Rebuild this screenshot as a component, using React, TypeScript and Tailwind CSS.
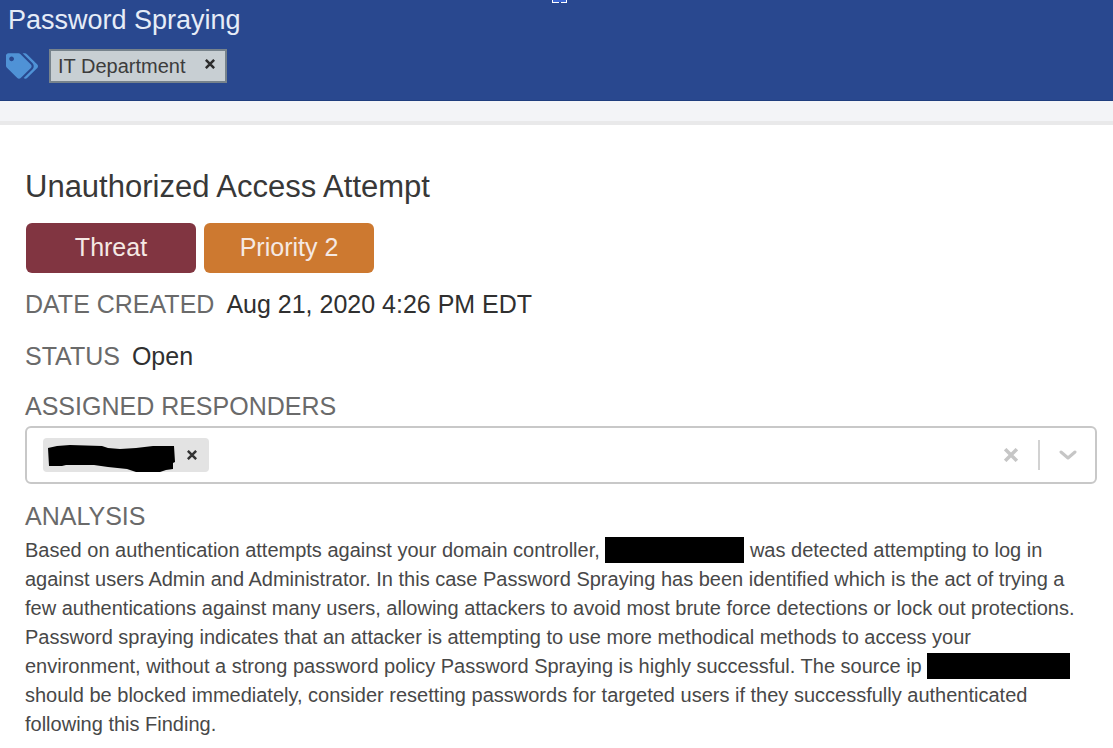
import React from "react";
import { FaTags } from "react-icons/fa";

function Cross({ className }: { className: string }) {
  return (
    <svg viewBox="0 0 12 12" className={className} fill="none" stroke="currentColor" strokeWidth="3" aria-hidden="true">
      <path d="M1 1 L11 11 M11 1 L1 11" />
    </svg>
  );
}

function Redacted({ className }: { className: string }) {
  return <span className={`inline-block h-[26px] bg-black align-[-6px] ${className}`} />;
}

function Field({ label, value }: { label: string; value: string }) {
  return (
    <div className="flex gap-3 text-[25px] leading-8">
      <dt className="text-[#6a6a6a]">{label}</dt>
      <dd className="text-[#303030]">{value}</dd>
    </div>
  );
}

export default function App() {
  return (
    <div className="bg-white font-['Liberation_Sans',Arial,sans-serif]">
      <header className="relative h-[101px] border-b border-[#1f3d7e] bg-[#29488f] px-2 pt-1">
        <svg viewBox="0 0 15 3" className="absolute left-1/2 top-0 h-[3px] w-[15px] -translate-x-[5px]" aria-hidden="true">
          <path d="M1 0H14V2H1Z" fill="#3b66d0" />
          <path d="M0 0H1V2H7V3H0Z M14 0H15V3H9V2H14Z" fill="#fff" />
        </svg>
        <h1 className="text-[27px] leading-8 text-[#e6ecf7]">Password Spraying</h1>
        <div className="mt-[13px] flex items-center gap-[11px]">
          <FaTags className="-ml-0.5 h-8 w-8 text-[#4f92d6]" aria-hidden="true" />
          <span className="flex h-[34px] items-center gap-5 border-2 border-[#77838c] bg-[#c8cfd3] pl-[7px] pr-2.5 text-[20px] text-[#3c3c3c]">
            IT Department
            <button type="button" aria-label="Remove IT Department" className="text-[#2c2c2c]">
              <Cross className="mb-1 h-2.5 w-2.5" />
            </button>
          </span>
        </div>
      </header>
      <div className="h-6 border-b-4 border-[#e9e9ea] bg-[#f3f4f7]" />

      <main className="pl-[25px] pr-4 pt-[42px]">
        <h2 className="text-[31px] leading-10 text-[#383838]">Unauthorized Access Attempt</h2>
        <div className="mt-4 flex gap-2 pl-px text-[25px] text-[#f5e9e4]">
          <span className="flex h-[50px] w-[170px] items-center justify-center rounded-md bg-[#813541]">Threat</span>
          <span className="flex h-[50px] w-[170px] items-center justify-center rounded-md bg-[#cd7930]">Priority 2</span>
        </div>
        <dl className="mt-[15px] flex flex-col gap-5">
          <Field label="DATE CREATED" value="Aug 21, 2020 4:26 PM EDT" />
          <Field label="STATUS" value="Open" />
        </dl>

        <h3 id="responders" className="mt-[18px] text-[25px] leading-8 text-[#6a6a6a]">ASSIGNED RESPONDERS</h3>
        <div role="group" aria-labelledby="responders" className="mt-1 flex h-[58px] items-center rounded-md border-2 border-[#c8c8c8] px-4">
          <span className="flex h-[34px] items-center gap-3 rounded-sm bg-[#e3e3e3] pl-[5px] pr-3">
            <svg viewBox="0 0 127 28" className="mt-1.5 h-7 w-[127px]" aria-hidden="true">
              <path d="M0 4 L9 2 L22 1 L54 2 L60 4 L72 5 L88 4 L105 2 L126 2 L127 18 L125 19 L125 25 L118 26 L112 28 L88 28 L79 25 L60 23 L46 21 L18 21 L14 22 L1 22 Z" />
            </svg>
            <button type="button" aria-label="Remove responder" className="text-[#333]">
              <Cross className="h-2.5 w-2.5" />
            </button>
          </span>
          <input aria-labelledby="responders" className="min-w-0 flex-1 self-stretch bg-transparent px-2 text-[20px] outline-none" />
          <button type="button" aria-label="Clear responders" className="text-[#c6c6c6]">
            <Cross className="h-3.5 w-3.5" />
          </button>
          <span className="ml-5 mr-[19px] h-[30px] w-0.5 bg-[#d2d2d2]" />
          <button type="button" aria-label="Show responders" className="mr-0.5 text-[#c6c6c6]">
            <svg viewBox="0 0 18 12" className="h-3 w-[18px]" fill="none" stroke="currentColor" strokeWidth="3" strokeLinecap="round" strokeLinejoin="round" aria-hidden="true">
              <path d="M2 3 L9 9 L16 3" />
            </svg>
          </button>
        </div>

        <h3 className="mt-4 text-[25px] leading-8 text-[#6a6a6a]">ANALYSIS</h3>
        <p className="mt-1 pr-3.5 text-[20px] leading-[29px] text-[#484848]">
          Based on authentication attempts against your domain controller, <Redacted className="w-[139px]" /> was detected
          attempting to log in against users Admin and Administrator. In this case Password Spraying has been identified
          which is the act of trying a few authentications against many users, allowing attackers to avoid most brute
          force detections or lock out protections. Password spraying indicates that an attacker is attempting to use
          more methodical methods to access your environment, without a strong password policy Password Spraying is
          highly successful. The source ip <Redacted className="w-[143px]" /> should be blocked immediately, consider
          resetting passwords for targeted users if they successfully authenticated following this Finding.
        </p>
      </main>
    </div>
  );
}
